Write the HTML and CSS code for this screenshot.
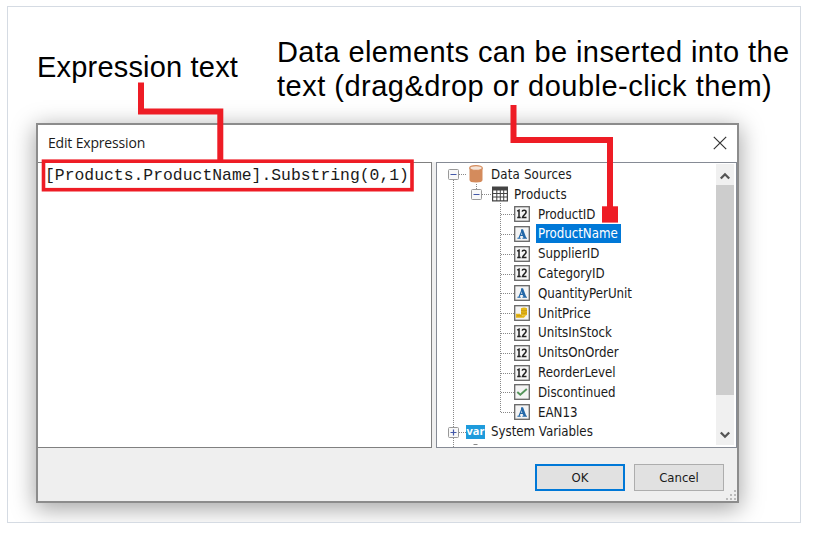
FILE: index.html
```html
<!DOCTYPE html>
<html lang="en">
<head>
<meta charset="utf-8">
<title>Edit Expression</title>
<link rel="stylesheet" href="styles.css">
</head>
<body>
<svg class="defs" width="0" height="0" aria-hidden="true">
  <symbol id="num" viewBox="0 0 16 16"><rect x=".7" y=".7" width="14.6" height="14.6" fill="#f4f4f4" stroke="#666" stroke-width="1.3"/><path d="M3.2 5.2 5 4.2V11.6M3.2 11.6H6.7M8.2 5.7C8.4 3.8 12.2 3.9 12.1 6.1 12 7.9 9.4 9.3 8.5 11.5H12.5" fill="none" stroke="#222" stroke-width="1.5"/></symbol>
  <symbol id="str" viewBox="0 0 16 16"><rect x=".7" y=".7" width="14.6" height="14.6" fill="#f4f4f4" stroke="#666" stroke-width="1.3"/><path d="M3.4 12.2H6.7M8.4 12.2H13M5 12 8.2 4M6.1 9.4H10" fill="none" stroke="#2468a8" stroke-width="1.1"/><path d="M7.2 3.3H9L12.3 12H9.5L7 5.2Z" fill="#2468a8"/></symbol>
  <symbol id="money" viewBox="0 0 16 16"><rect x=".7" y=".7" width="14.6" height="14.6" fill="#f4f4f4" stroke="#666" stroke-width="1.3"/><path d="M7 3.2Q10 2 13 3.2V10Q10 11.3 7 10Z" fill="#e5b718"/><path d="M1.8 8.8H6L7.5 10.6H12L9.8 12.8H2Z" fill="#e5b718"/><path d="M7 5.4Q10 6.5 13 5.4M7 7.8Q10 9 13 7.8M3 10.8H8" fill="none" stroke="#b98b12" stroke-width=".7"/></symbol>
  <symbol id="bool" viewBox="0 0 16 16"><rect x=".7" y=".7" width="14.6" height="14.6" fill="#f4f4f4" stroke="#666" stroke-width="1.3"/><path d="M3.3 8 6.3 10.8 12.8 5" fill="none" stroke="#55945b" stroke-width="1.9"/></symbol>
</svg>
<main class="frame">
  <div class="notes">
    <p class="note note-text">Expression text</p>
    <p class="note note-data"><span class="line1">Data elements can be inserted into the</span><br><span class="line2">text (drag&amp;drop or double-click them)</span></p>
  </div>
  <section class="window">
    <header class="titlebar">
      <span class="title">Edit Expression</span>
      <svg class="close" width="14" height="14" viewBox="0 0 14 14"><path d="M.8.8 13.2 13.2M13.2.8.8 13.2" stroke="#333" stroke-width="1.2"/></svg>
    </header>
    <div class="panes">
      <div class="editor">[Products.ProductName].Substring(0,1)</div>
      <div class="tree">
        <div class="rows">
          <div class="row root"><svg class="icon db" width="14" height="18" viewBox="0 0 14 18"><path d="M.5 3V15Q.5 17.5 7 17.5T13.5 15V3Z" fill="#d48b5c"/><ellipse cx="7" cy="3" rx="6.3" ry="2.4" fill="#f5e4d8" stroke="#d48b5c" stroke-width="1.2"/></svg><span class="label ds">Data Sources</span></div>
          <div class="row table"><svg class="icon" width="16" height="15" viewBox="0 0 16 15"><path d="M0 0H16V15H0Z" fill="#444"/><path d="M1.2 4H4.3V6.5H1.2ZM5.3 4H7.8V6.5H5.3ZM8.8 4H11.2V6.5H8.8ZM12.2 4H14.8V6.5H12.2ZM1.2 7.5H4.3V10H1.2ZM5.3 7.5H7.8V10H5.3ZM8.8 7.5H11.2V10H8.8ZM12.2 7.5H14.8V10H12.2ZM1.2 11H4.3V13.8H1.2ZM5.3 11H7.8V13.8H5.3ZM8.8 11H11.2V13.8H8.8ZM12.2 11H14.8V13.8H12.2Z" fill="#fff"/></svg><span class="label">Products</span></div>
          <div class="row"><svg class="icon"><use href="#num"/></svg><span class="label">ProductID</span></div>
          <div class="row"><svg class="icon"><use href="#str"/></svg><span class="label selected">ProductName</span></div>
          <div class="row"><svg class="icon"><use href="#num"/></svg><span class="label">SupplierID</span></div>
          <div class="row"><svg class="icon"><use href="#num"/></svg><span class="label">CategoryID</span></div>
          <div class="row"><svg class="icon"><use href="#str"/></svg><span class="label">QuantityPerUnit</span></div>
          <div class="row"><svg class="icon"><use href="#money"/></svg><span class="label">UnitPrice</span></div>
          <div class="row"><svg class="icon"><use href="#num"/></svg><span class="label">UnitsInStock</span></div>
          <div class="row"><svg class="icon"><use href="#num"/></svg><span class="label">UnitsOnOrder</span></div>
          <div class="row"><svg class="icon"><use href="#num"/></svg><span class="label">ReorderLevel</span></div>
          <div class="row"><svg class="icon"><use href="#bool"/></svg><span class="label">Discontinued</span></div>
          <div class="row"><svg class="icon"><use href="#str"/></svg><span class="label">EAN13</span></div>
          <div class="row sys"><span class="var">var</span><span class="label">System Variables</span></div>
        </div>
        <svg class="lines" width="100" height="284" viewBox="437 163 100 284">
          <g fill="none" stroke="#888" stroke-dasharray="1 1">
            <path d="M453.5 180V447M459 174.5H467M476.5 184V189M482 194.5H491M500.5 203V412"/>
            <path d="M501 214.5H514M501 234.5H514M501 254.5H514M501 274.5H514M501 293.5H514M501 313.5H514M501 333.5H514M501 353.5H514M501 373.5H514M501 392.5H514M501 412.5H514M459 432.5H466"/>
          </g>
          <g fill="#f8f8f8" stroke="#999"><rect x="448.5" y="169.5" width="10" height="10" rx="1"/><rect x="471.5" y="189.5" width="10" height="10" rx="1"/><rect x="448.5" y="427.5" width="10" height="10" rx="1"/></g>
          <path d="M450.5 174.5H456.5M473.5 194.5H479.5M450.5 432.5H456.5M453.5 429.5V435.5" stroke="#4358a8" stroke-width="1.2"/>
          <path d="M473.500 444.500H477.500" stroke="#888"/>
        </svg>
        <div class="scrollbar">
          <svg width="18" height="21" viewBox="0 0 18 21"><path d="M4.800 14.500 9 10.300 13.200 14.500" fill="none" stroke="#555" stroke-width="2.300"/></svg>
          <div class="thumb"></div>
          <svg width="18" height="21" viewBox="0 0 18 21"><path d="M4.800 8.500 9 12.700 13.200 8.500" fill="none" stroke="#555" stroke-width="2.300"/></svg>
        </div>
      </div>
    </div>
    <footer class="footer">
      <button class="btn primary">OK</button><button class="btn">Cancel</button>
      <svg class="grip" width="11" height="11" viewBox="0 0 11 11"><path d="M0 8H2V10H0ZM4 8H6V10H4ZM8 8H10V10H8ZM4 4H6V6H4ZM8 4H10V6H8ZM8 0H10V2H8Z" fill="#bbb"/></svg>
    </footer>
  </section>
  <svg class="callouts" width="817" height="534" viewBox="0 0 817 534">
    <g fill="none" stroke="#ee1c25" stroke-width="6"><path d="M141 82.500V111.500H220.300V161"/><path d="M513.500 105V140H610V208"/><rect x="43.500" y="161.200" width="368.500" height="28.500" stroke-width="3.600"/></g>
    <rect x="602" y="206.300" width="16" height="16.300" fill="#ee1c25"/>
  </svg>
</main>
</body>
</html>
```
FILE: styles.css
```css
* { box-sizing: border-box; }
body { margin: 0; background: #fff; }
.defs { position: absolute; }
.frame {
  width: 794px;
  height: 517px;
  margin: 6px 0 0 7px;
  border: 1px solid #d5dbe3;
  overflow: hidden;
}
.notes {
  display: flex;
  height: 116px;
  padding: 28px 0 0 29px;
  font: 29px/34px "Liberation Sans", Arial, sans-serif;
  color: #000;
}
.note { margin: 0; white-space: nowrap; }
.note-text { width: 240px; padding-top: 15px; letter-spacing: .19px; }
.line1 { letter-spacing: .42px; }
.line2 { letter-spacing: .49px; }
.window {
  display: flex;
  flex-direction: column;
  width: 703px;
  height: 380px;
  margin-left: 28px;
  border: 2px solid #8c8c8c;
  background: #efefef;
  box-shadow: 0 5px 22px 1px rgba(0, 0, 0, .36);
  font-family: "DejaVu Sans Condensed", "DejaVu Sans", sans-serif;
  font-stretch: condensed;
  font-size: 13px;
  color: #1a1a1a;
}
.titlebar {
  display: flex;
  flex: none;
  align-items: center;
  justify-content: space-between;
  height: 37px;
  padding: 0 10px 2px 10px;
  background: #fff;
}
.title { font: 14px "Open Sans", sans-serif; letter-spacing: -.17px; }
.panes { display: flex; flex: none; justify-content: space-between; height: 286px; }
.editor {
  width: 394px;
  border: 1px solid #808080;
  border-left: 0;
  background: #fff;
  padding: 4px 0 0 7px;
  font: 16.4px/18px "Liberation Mono", "Courier New", monospace;
  white-space: nowrap;
}
.tree {
  position: relative;
  display: flex;
  justify-content: space-between;
  width: 301px;
  border: 1px solid #868b95;
  background: #fff;
  overflow: hidden;
}
.rows { padding-top: 1.500px; }
.row { display: flex; align-items: center; height: 19.820px; padding-left: 77px; white-space: nowrap; }
.root { padding-left: 32px; }
.table { padding-left: 55px; }
.sys { padding-left: 29px; }
.icon { flex: none; width: 16px; height: 16px; }
.db { width: 14px; height: 18px; }
.label { margin-left: 6px; padding: 0 3px 0 2px; line-height: 19px; font-size: 13.2px; letter-spacing: -.02px; }
.root .label { letter-spacing: .16px; }
.table .label { margin-left: 4px; letter-spacing: .2px; }
.sys .label { margin-left: 4px; }
.row .selected { background: #0078d7; color: #fff; }
.var {
  width: 19px;
  height: 14px;
  background: #1e9bdc;
  color: #fff;
  font: bold 11px/12px "Open Sans", sans-serif;
  text-align: center;
}
.lines { position: absolute; left: 0; top: 0; }
.scrollbar { display: flex; flex-direction: column; width: 18px; margin: 1px 2px 2px 0; background: #f0f0f0; }
.thumb { height: 210px; margin-bottom: auto; background: #cdcdcd; }
.footer { position: relative; display: flex; flex: 1; justify-content: flex-end; gap: 9px; padding: 16px 13px 0 0; }
.btn {
  width: 90px;
  height: 27px;
  padding: 0;
  border: 1px solid #adadad;
  background: #e1e1e1;
  color: #1a1a1a;
  font: inherit;
}
.primary { border: 2px solid #0078d7; }
.grip { position: absolute; right: 0; bottom: 0; }
.callouts { position: absolute; left: 0; top: 0; }
```
